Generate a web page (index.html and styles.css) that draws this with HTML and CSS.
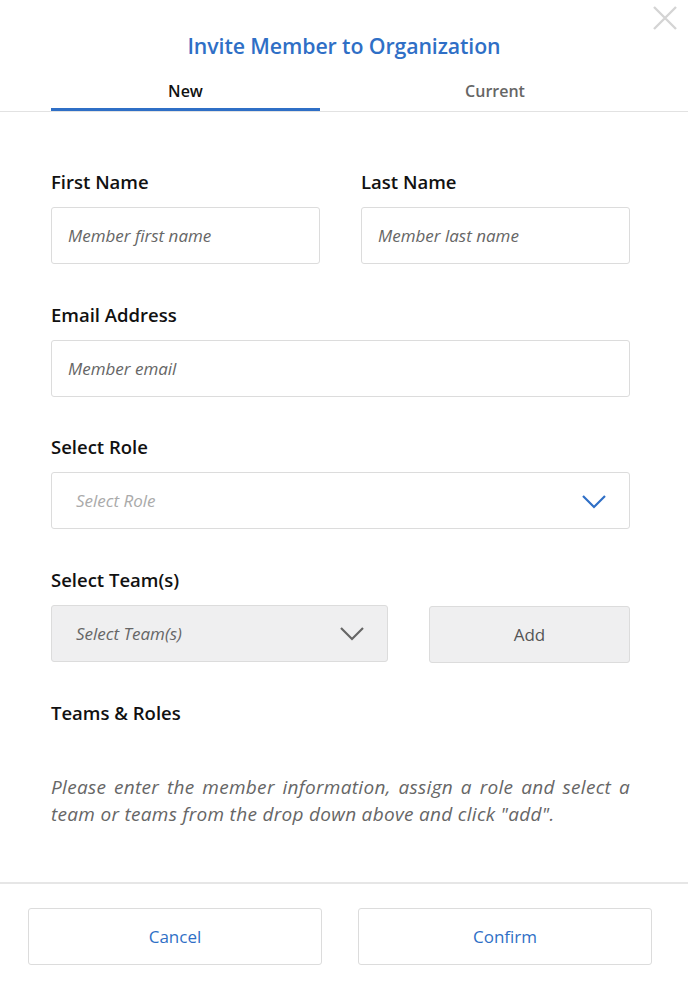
FILE: index.html
```html
<!DOCTYPE html>
<html>
<head>
<meta charset="utf-8">
<link rel="stylesheet" href="styles.css">
</head>
<body>
<div class="modal">
  <button class="close" aria-label="Close">
    <svg width="26" height="26" viewBox="0 0 26 26"><path d="M2 2 L24 24 M24 2 L2 24" stroke="#d4d4d4" stroke-width="2.4" fill="none"/></svg>
  </button>
  <h1 class="title">Invite Member to Organization</h1>
  <div class="tabs">
    <div class="tab tab-active">New</div>
    <div class="tab tab-current">Current</div>
  </div>
  <div class="form">
    <div class="row two">
      <div class="field">
        <div class="label">First Name</div>
        <div class="input"><span class="ph">Member first name</span></div>
      </div>
      <div class="field">
        <div class="label">Last Name</div>
        <div class="input"><span class="ph">Member last name</span></div>
      </div>
    </div>
    <div class="field">
      <div class="label">Email Address</div>
      <div class="input"><span class="ph">Member email</span></div>
    </div>
    <div class="field">
      <div class="label">Select Role</div>
      <div class="input select">
        <span class="ph light">Select Role</span>
        <svg class="chev" width="24" height="14" viewBox="0 0 24 14"><path d="M1 1 L12 12 L23 1" stroke="#2f6fc6" stroke-width="2.2" fill="none"/></svg>
      </div>
    </div>
    <div class="field">
      <div class="label">Select Team(s)</div>
      <div class="team-row">
        <div class="input select gray">
          <span class="ph">Select Team(s)</span>
          <svg class="chev" width="24" height="14" viewBox="0 0 24 14"><path d="M1 1 L12 12 L23 1" stroke="#666" stroke-width="2.2" fill="none"/></svg>
        </div>
        <div class="add">Add</div>
      </div>
    </div>
    <div class="field">
      <div class="label">Teams &amp; Roles</div>
    </div>
    <p class="note">Please enter the member information, assign a role and select a team or teams from the drop down above and click "add".</p>
  </div>
  <div class="footer">
    <div class="btn">Cancel</div>
    <div class="btn">Confirm</div>
  </div>
</div>
</body>
</html>
```
FILE: styles.css
```css
* { box-sizing: border-box; }
html, body { margin: 0; padding: 0; background: #fff; }
body { font-family: "Open Sans", "Liberation Sans", sans-serif; color: #111; }
.modal { width: 688px; height: 989px; position: relative; overflow: hidden; }
.close { position: absolute; left: 652px; top: 5px; width: 26px; height: 26px; border: 0; padding: 0; background: none; }
.close svg { display: block; }
.title { margin: 0; padding-top: 31px; height: 76px; text-align: center; font-size: 21.3px; font-weight: 600; color: #2f6fc6; line-height: 30px; letter-spacing: -0.1px; }
.tabs { display: flex; padding-left: 51px; border-bottom: 1px solid #e2e2e2; height: 36px; }
.tab { font-size: 16px; font-weight: 600; line-height: 30px; text-align: center; }
.tab-active { width: 269px; color: #111; border-bottom: 3px solid #2f6fc6; }
.tab-current { width: 350px; color: #666; }
.form { padding: 58px 58px 0 51px; }
.row.two { display: flex; gap: 41px; }
.row.two .field { flex: 1; }
.field { margin-bottom: 38.5px; }
.label { font-size: 18.5px; font-weight: 600; line-height: 24px; margin-bottom: 13px; letter-spacing: 0; }
.input { height: 57px; border: 1px solid #dcdcdc; border-radius: 3px; display: flex; align-items: center; padding-left: 16px; }
.ph { font-style: italic; font-size: 17px; color: #666; }
.ph.light { color: #aaa; }
.select { justify-content: space-between; padding-left: 24px; padding-right: 23px; }
.chev { display: block; margin-top: 2px; }
.team-row { display: flex; gap: 41px; align-items: flex-start; }
.gray { background: #efeff0; width: 337px; }
.add { flex: 1; height: 57px; margin-top: 1px; background: #efeff0; border: 1px solid #dcdcdc; border-radius: 3px; display: flex; align-items: center; justify-content: center; font-size: 17px; color: #555; }
.field:last-of-type { margin-bottom: 0; }
.note { margin: 49px 0 0 0; font-size: 19px; font-style: italic; line-height: 27px; color: #666; text-align: justify; letter-spacing: 0.3px; }
.footer { position: absolute; left: 0; right: 0; top: 882px; border-top: 2px solid #e6e6e6; display: flex; gap: 36px; padding: 24px 36px 0 28px; }
.btn { flex: 1; height: 57px; border: 1px solid #dcdcdc; border-radius: 3px; display: flex; align-items: center; justify-content: center; font-size: 17px; color: #2f6fc6; }
```
